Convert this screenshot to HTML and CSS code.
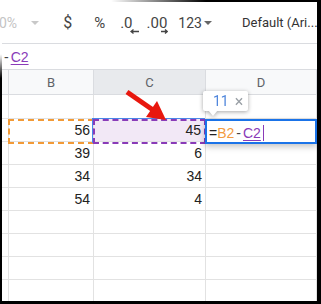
FILE: index.html
```html
<!DOCTYPE html>
<html lang="en">
<head>
  <meta charset="UTF-8">
  <title>Sheets formula</title>
  <link rel="stylesheet" href="styles.css">
</head>
<body>
  <div class="frame">
    <div class="toolbar">
      <span class="zoom">0%</span>
      <span class="caret dim"></span>
      <span class="sep"></span>
      <span class="tb dollar">$</span>
      <span class="tb pct">%</span>
      <span class="tb dec dec-less">.0<svg class="dec-arrow" width="9" height="5" viewBox="0 0 9 5"><path d="M9 2.5H2M3.5 0.5L1 2.5L3.5 4.5" fill="none" stroke="#444" stroke-width="1.3"/></svg></span>
      <span class="tb dec dec-more">.00<svg class="dec-arrow" width="7" height="5" viewBox="0 0 7 5"><path d="M0 2.5H6M4 0.5L6.2 2.5L4 4.5" fill="none" stroke="#444" stroke-width="1.3"/></svg></span>
      <span class="tb num">123</span>
      <span class="caret"></span>
      <span class="sep sep-2"></span>
      <span class="font-name">Default (Ari...</span>
    </div>

    <div class="formula-bar"><span class="op">-</span><span class="ref ref-c">C2</span></div>

    <div class="sheet">
      <div class="cell head"></div>
      <div class="cell head">B</div>
      <div class="cell head head-on">C</div>
      <div class="cell head">D</div>

      <div class="cell"></div><div class="cell"></div><div class="cell"></div><div class="cell"></div>
      <div class="cell"></div><div class="cell val">56</div><div class="cell val c-fill">45</div><div class="cell"></div>
      <div class="cell"></div><div class="cell val">39</div><div class="cell val">6</div><div class="cell"></div>
      <div class="cell"></div><div class="cell val">34</div><div class="cell val">34</div><div class="cell"></div>
      <div class="cell"></div><div class="cell val">54</div><div class="cell val">4</div><div class="cell"></div>
      <div class="cell"></div><div class="cell"></div><div class="cell"></div><div class="cell"></div>
      <div class="cell"></div><div class="cell"></div><div class="cell"></div><div class="cell"></div>
      <div class="cell"></div><div class="cell"></div><div class="cell"></div><div class="cell"></div>
      <div class="cell"></div><div class="cell"></div><div class="cell"></div><div class="cell"></div>
    </div>

    <!-- range highlights and the open editor sit over the grid -->
    <div class="hl hl-b"></div>
    <div class="hl hl-c"></div>
    <div class="editor">=<span class="ref-b">B2</span><span class="op">-</span><span class="ref ref-c">C2</span><span class="cursor"></span></div>

    <div class="tip"><span class="tip-val">11</span><span class="tip-x">×</span></div>

    <svg class="arrow" width="50" height="40" viewBox="0 0 50 40">
      <path d="M7 7L33 25" stroke="#e8170e" stroke-width="5"/>
      <polygon points="46,35 26,32 37,16" fill="#e8170e"/>
    </svg>
  </div>
</body>
</html>
```

FILE: styles.css
```css
body {
  margin: 0;
  background: #fff;
}

.frame {
  position: relative;
  width: 321px;
  height: 304px;
  box-sizing: border-box;
  padding: 2px 0 0 2px;
  border-right: 4px solid #000;
  border-bottom: 3px solid #000;
  overflow: hidden;
  background: #fff;
}

/* the outer frame fades out toward the top left corner */
.frame::before {
  content: '';
  position: absolute;
  top: 0;
  left: 0;
  right: 0;
  height: 2px;
  background: linear-gradient(to right, rgba(0,0,0,0) 35%, #000 65%);
  z-index: 5;
}

.frame::after {
  content: '';
  position: absolute;
  top: 0;
  left: 0;
  bottom: 0;
  width: 2px;
  background: linear-gradient(to bottom, rgba(0,0,0,0) 18%, #000 26%);
  z-index: 5;
}

.toolbar {
  height: 42px;
  box-sizing: border-box;
  border-bottom: 1px solid #dadce0;
  display: flex;
  align-items: center;
  font-family: Roboto, "Liberation Sans", sans-serif;
  font-size: 14px;
  color: #444;
  white-space: nowrap;
}

.zoom {
  margin-left: -3px;
  color: #c4c4c4;
}

.caret {
  width: 0;
  height: 0;
  border-left: 4px solid transparent;
  border-right: 4px solid transparent;
  border-top: 4px solid #666;
  margin-left: 2px;
}

.caret.dim {
  border-top-color: #c8c8c8;
  margin-left: 14px;
}

.sep {
  width: 1px;
  height: 21px;
  background: #dadce0;
  margin-left: 10px;
}

.dollar { margin-left: 14px; font-size: 16px; }
.pct { margin-left: 22px; font-size: 15px; }
.dec-less { margin-left: 15px; font-size: 15px; }
.dec-more { margin-left: 14px; font-size: 15px; }
.num { margin-left: 11px; }
.sep-2 { margin-left: 12px; }

.dec {
  position: relative;
}

.dec-arrow {
  position: absolute;
  top: 15px;
}

.dec-less .dec-arrow { left: 10px; }
.dec-more .dec-arrow { left: 14px; }

.font-name {
  margin-left: 18px;
  font-size: 13px;
  color: #333;
}

.formula-bar {
  height: 26px;
  box-sizing: border-box;
  border-bottom: 1px solid #dadce0;
  padding: 4px 0 0 2px;
  font-family: "Liberation Sans", Arial, sans-serif;
  font-size: 14px;
  line-height: 18px;
}

.op {
  color: #444;
  margin-right: 2px;
}

.ref {
  text-decoration: underline;
  text-underline-offset: 2px;
}

.ref-c { color: #8a3bb8; }
.ref-b { color: #f39b40; margin-right: 2px; }

.sheet {
  display: grid;
  grid-template-columns: 7px 85px 112px 111px;
  grid-template-rows: 25px 24px;
  grid-auto-rows: 23px;
  font-family: "Liberation Sans", Arial, sans-serif;
  font-size: 14px;
  color: #222;
}

.cell {
  box-sizing: border-box;
  border-right: 1px solid #e2e2e2;
  border-bottom: 1px solid #e2e2e2;
}

.head {
  background: #f8f9fa;
  border-color: #dadce0;
  color: #5f6368;
  font-family: Roboto, "Liberation Sans", sans-serif;
  font-size: 13px;
  display: flex;
  align-items: center;
  justify-content: center;
  padding-top: 1px;
}

.head-on {
  background: #e8eaed;
}

.val {
  display: flex;
  align-items: flex-end;
  justify-content: flex-end;
  padding: 0 3px 2px 0;
  line-height: 18px;
}

.c-fill {
  background: #f2e8f6;
  padding-right: 4px;
}

.hl {
  position: absolute;
  top: 119px;
  height: 25px;
  box-sizing: border-box;
}

.hl-b {
  left: 8px;
  width: 86px;
  border: 2px dashed #f29a36;
}

.hl-c {
  left: 93px;
  width: 113px;
  border: 2px dashed #8a3bb8;
  box-shadow: -1px -1px 0 #4a86e8;
}

.editor {
  position: absolute;
  left: 205px;
  top: 119px;
  width: 112px;
  height: 25px;
  box-sizing: border-box;
  border: 2px solid #1a73e8;
  background: #fff;
  box-shadow: 0 3px 6px rgba(0,0,0,0.22);
  padding: 3px 0 0 2px;
  font-family: "Liberation Sans", Arial, sans-serif;
  font-size: 14px;
  line-height: 18px;
  color: #222;
  display: flex;
  align-items: flex-start;
}

.editor .op {
  margin-right: 2px;
}

.cursor {
  width: 1px;
  height: 16px;
  background: #8a3bb8;
  margin: 1px 0 0 2px;
}

.tip {
  position: absolute;
  left: 203px;
  top: 91px;
  width: 45px;
  height: 20px;
  box-sizing: border-box;
  background: #fff;
  border-radius: 2px;
  filter: drop-shadow(0 1px 2px rgba(0,0,0,0.35));
  display: flex;
  align-items: center;
  padding-left: 10px;
  font-family: Roboto, "Liberation Sans", sans-serif;
  font-size: 14px;
}

.tip::after {
  content: '';
  position: absolute;
  left: 5px;
  top: 19px;
  border-left: 5px solid transparent;
  border-right: 5px solid transparent;
  border-top: 6px solid #fff;
}

.tip-val {
  color: #4f86dc;
}

.tip-x {
  color: #9aa0a6;
  margin-left: 6px;
  font-size: 16px;
}

.arrow {
  position: absolute;
  left: 120px;
  top: 85px;
}
```
